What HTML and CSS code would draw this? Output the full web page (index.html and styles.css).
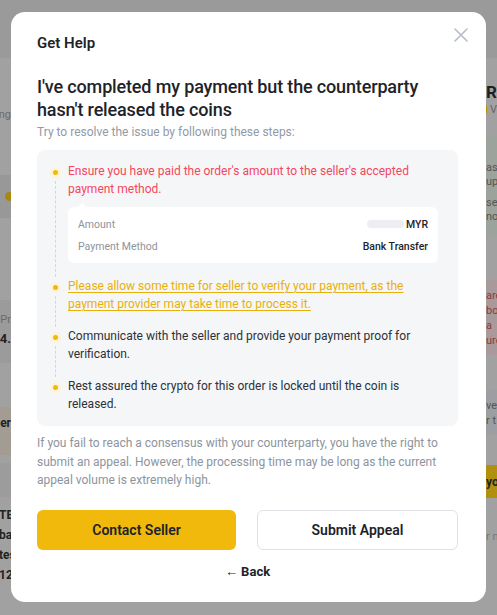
FILE: index.html
```html
<!DOCTYPE html>
<html lang="en">
<head>
<meta charset="utf-8">
<title>Get Help</title>
<link rel="stylesheet" href="styles.css">
</head>
<body>
<div class="page">
  <div class="page-header"></div>
  <div class="page-body">
    <div class="side side-left">
      <div class="frag f-small l-hin"><span>Remaining</span></div>
      <div class="band b1"><span class="coin"></span></div>
      <div class="band b2">
        <div class="frag f-small"><span>Pr</span></div>
        <div class="frag f-big"><span>4.</span></div>
      </div>
      <div class="band b3"><div class="frag f-bold"><span>Order</span></div></div>
      <div class="band b4"></div>
      <div class="rows">
        <div class="lfrag">TETHER</div>
        <div class="lfrag">bank</div>
        <div class="lfrag">tes:</div>
        <div class="lfrag">12</div>
      </div>
    </div>
    <div class="side side-right">
      <div class="rfrag r-name">Ra</div>
      <div class="rfrag r-verify"><span class="shield"></span>V</div>
      <div class="rband r1">
        <div class="rfrag">ase</div><div class="rfrag">upl</div>
        <div class="rfrag r-sp">se</div><div class="rfrag">not</div>
      </div>
      <div class="rband r2">
        <div class="rfrag r-red">are</div><div class="rfrag r-red">bor</div>
        <div class="rfrag r-red">a</div><div class="rfrag r-red">ure</div>
      </div>
      <div class="rband r3"><div class="rfrag">ve</div><div class="rfrag">r t</div></div>
      <div class="rband r4"><div class="rfrag r-bold">yo</div></div>
      <div class="rfrag r5">r m</div>
    </div>
  </div>
</div>

<div class="overlay">
  <div class="modal">
    <button class="close" aria-label="Close">
      <svg width="14" height="14" viewBox="0 0 14 14"><path d="M1 1L13 13M13 1L1 13" stroke="#b7bdc6" stroke-width="1.6" stroke-linecap="round"/></svg>
    </button>
    <div class="modal-title">Get Help</div>
    <h1 class="heading">I've completed my payment but the counterparty hasn't released the coins</h1>
    <p class="subtitle">Try to resolve the issue by following these steps:</p>

    <div class="steps">
      <div class="step">
        <div class="rail"><span class="dot"></span><span class="line"></span></div>
        <div class="step-body">
          <div class="step-text red">Ensure you have paid the order's amount to the seller's accepted payment method.</div>
          <div class="card">
            <span class="caret"></span>
            <div class="card-row"><span class="label">Amount</span><span class="value"><span class="blur"></span>MYR</span></div>
            <div class="card-row"><span class="label">Payment Method</span><span class="value">Bank Transfer</span></div>
          </div>
        </div>
      </div>
      <div class="step">
        <div class="rail"><span class="dot"></span><span class="line"></span></div>
        <div class="step-body">
          <a class="step-text link" href="#">Please allow some time for seller to verify your payment, as the payment provider may take time to process it.</a>
        </div>
      </div>
      <div class="step">
        <div class="rail"><span class="dot"></span><span class="line"></span></div>
        <div class="step-body">
          <div class="step-text">Communicate with the seller and provide your payment proof for verification.</div>
        </div>
      </div>
      <div class="step">
        <div class="rail"><span class="dot"></span></div>
        <div class="step-body">
          <div class="step-text">Rest assured the crypto for this order is locked until the coin is released.</div>
        </div>
      </div>
    </div>

    <p class="note">If you fail to reach a consensus with your counterparty, you have the right to submit an appeal. However, the processing time may be long as the current appeal volume is extremely high.</p>

    <div class="actions">
      <button class="btn btn-primary">Contact Seller</button>
      <button class="btn btn-secondary">Submit Appeal</button>
    </div>
    <div class="back">&larr; Back</div>
  </div>
</div>
</body>
</html>
```

FILE: styles.css
```css
* { box-sizing: border-box; }

html, body {
  margin: 0;
  padding: 0;
  width: 497px;
  height: 615px;
  overflow: hidden;
}

body {
  background: #a0a0a0;
  font-family: Roboto, "Liberation Sans", sans-serif;
  color: #1e2329;
}

/* ---------- dimmed page behind the dialog ---------- */
.page {
  width: 497px;
  height: 615px;
  display: flex;
  flex-direction: column;
}
.page-header {
  height: 58px;
  background: #9a9a9a;
  flex: none;
}
.page-body {
  flex: 1;
  display: flex;
  justify-content: space-between;
  background: #a1a1a1;
}
.side { display: flex; flex-direction: column; }

.side-left { width: 11px; }
.frag {
  display: flex;
  justify-content: flex-end;
  white-space: nowrap;
  width: 11px;
  font-size: 11px;
  line-height: 16px;
  color: #555;
}
.f-small { color: #6a6a6a; }
.f-big { font-weight: 700; color: #222; font-size: 13px; line-height: 22px; }
.f-bold { font-weight: 700; color: #222; font-size: 12px; line-height: 20px; }
.l-hin { margin-top: 49px; }
.band { width: 11px; display: flex; flex-direction: column; }
.b1 { margin-top: 52px; height: 43px; background: #989898; justify-content: center; align-items: flex-end; }
.coin { width: 9px; height: 9px; border-radius: 50%; background: #aa8610; margin-right: -3px; }
.b2 { margin-top: 82px; height: 63px; background: #9b9b9b; padding-top: 12px; }
.b3 { margin-top: 44px; height: 48px; background: #a29c93; padding-top: 6px; }
.b4 { margin-top: 8px; height: 34px; background: #9c9c9c; }
.rows { margin-top: 8px; }
.lfrag {
  white-space: nowrap;
  font-size: 12px;
  line-height: 20px;
  font-weight: 700;
  color: #222;
  margin-left: -1px;
}

.side-right { width: 11px; padding-top: 23px; }
.rfrag {
  white-space: nowrap;
  font-size: 11px;
  line-height: 14px;
  color: #555;
}
.r-name { font-size: 17px; line-height: 22px; font-weight: 700; color: #1f1f1f; }
.r-verify { display: flex; align-items: center; gap: 3px; color: #666; }
.shield { width: 5px; height: 8px; background: #b88e0a; border-radius: 0 1px 4px 0; }
.rband { width: 11px; overflow: visible; }
.r1 { margin-top: 20px; height: 98px; background: #9ca39d; padding-top: 24px; }
.r-sp { margin-top: 7px; }
.r2 { margin-top: 45px; height: 75px; background: #a8999b; padding-top: 8px; }
.r-red { color: #8d3a41; line-height: 15px; }
.r3 { margin-top: 35px; height: 45px; background: #9c9ea1; padding-top: 8px; }
.r3 .rfrag { line-height: 15px; }
.r4 { margin-top: 30px; height: 33px; background: #b0900e; display: flex; align-items: center; }
.r-bold { font-weight: 700; color: #222; font-size: 12px; }
.r5 { margin-top: 31px; line-height: 16px; color: #777; }

/* ---------- dialog ---------- */
.overlay {
  position: fixed;
  inset: 0;
  display: flex;
  justify-content: center;
  align-items: flex-start;
  padding-top: 12px;
}
.modal {
  position: relative;
  width: 475px;
  height: 590px;
  background: #ffffff;
  border-radius: 14px;
  padding: 21px 28px 0 26px;
  display: flex;
  flex-direction: column;
}
.close {
  position: absolute;
  top: 16px;
  right: 18px;
  border: 0;
  background: none;
  padding: 0;
  width: 14px;
  height: 14px;
  display: flex;
}
.modal-title {
  font-size: 15px;
  line-height: 20px;
  font-weight: 600;
  color: #1e2329;
}
.heading {
  margin: 22px 0 0;
  font-size: 18px;
  line-height: 23px;
  font-weight: 500;
  letter-spacing: -0.15px;
  color: #1e2329;
}
.subtitle {
  margin: 2px 0 0;
  font-size: 12px;
  line-height: 18px;
  color: #929aa5;
}

.steps {
  margin-top: 9px;
  background: #f5f6f8;
  border-radius: 8px;
  padding: 12px 20px 13px 12px;
  display: flex;
  flex-direction: column;
}
.step {
  display: flex;
  gap: 7px;
}
.rail {
  width: 12px;
  flex: none;
  display: flex;
  flex-direction: column;
  align-items: center;
  padding-top: 5px;
}
.dot {
  width: 11px;
  height: 11px;
  border-radius: 50%;
  background: #fdf3d6;
  display: flex;
  align-items: center;
  justify-content: center;
  flex: none;
}
.dot::after {
  content: "";
  width: 5px;
  height: 5px;
  border-radius: 50%;
  background: #f0b90b;
}
.line {
  flex: 1;
  margin-top: 3px;
  border-left: 1px dashed #d3d7dc;
}
.step-body {
  flex: 1;
  padding-bottom: 14px;
}
.step:last-child .step-body { padding-bottom: 0; }
.step-text {
  display: block;
  font-size: 12px;
  line-height: 18px;
  color: #2b3139;
}
.step-text.red { color: #f6465d; }
.step-text.link {
  color: #e8b00b;
  text-decoration: underline;
  text-underline-offset: 2px;
}
.card {
  position: relative;
  margin-top: 9px;
  background: #ffffff;
  border-radius: 6px;
  padding: 6px 10px;
}
.caret {
  position: absolute;
  top: -4px;
  left: 10px;
  width: 0;
  height: 0;
  border-left: 4px solid transparent;
  border-right: 4px solid transparent;
  border-bottom: 4px solid #ffffff;
}
.card-row {
  display: flex;
  justify-content: space-between;
  align-items: center;
  height: 22px;
  font-size: 10.5px;
}
.label { color: #8d949e; }
.value { color: #1e2329; font-weight: 500; display: flex; align-items: center; gap: 2px; }
.blur {
  width: 37px;
  height: 8px;
  border-radius: 4px;
  background: #eceef1;
}

.note {
  margin: 8px 0 0;
  font-size: 12px;
  line-height: 18.5px;
  color: #8d949e;
}

.actions {
  margin-top: 20px;
  display: flex;
  gap: 21px;
}
.btn {
  flex: 1;
  height: 40px;
  border-radius: 6px;
  font-family: inherit;
  font-size: 14px;
  font-weight: 600;
  color: #1e2329;
  cursor: pointer;
}
.btn-primary {
  background: #f0b90b;
  border: 0;
}
.btn-secondary {
  background: #ffffff;
  border: 1px solid #dfe2e6;
}
.back {
  margin-top: 14px;
  text-align: center;
  font-size: 13px;
  line-height: 16px;
  font-weight: 700;
  color: #1e2329;
}
```
